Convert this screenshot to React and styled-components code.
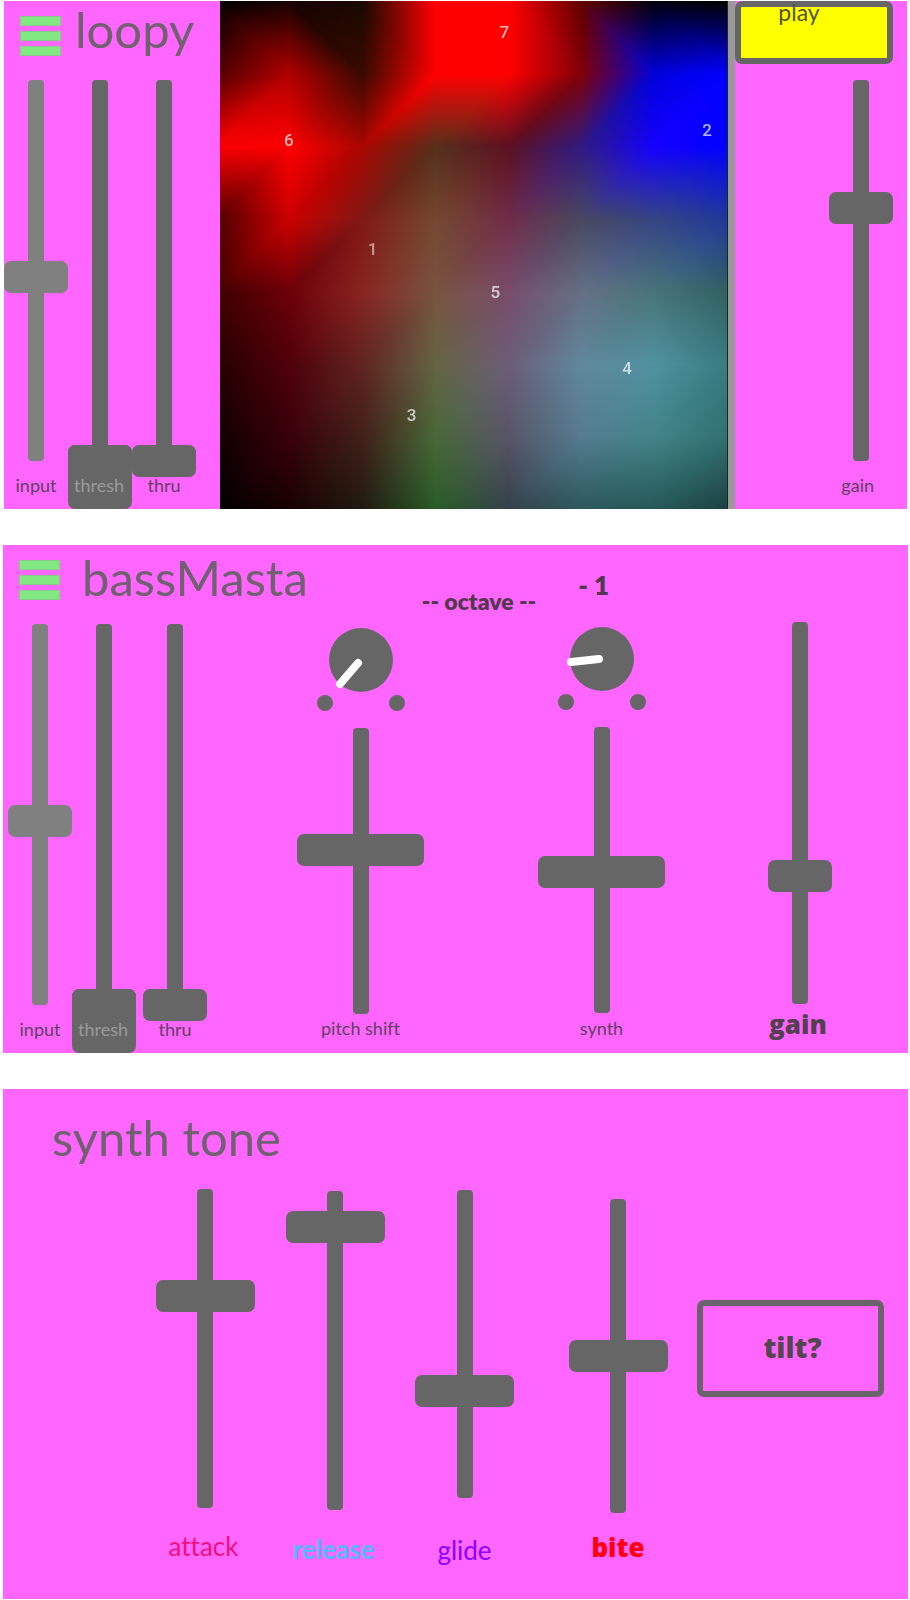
import React, { useEffect, useRef, useState } from "react";
import styled, { createGlobalStyle } from "styled-components";

const GlobalStyle = createGlobalStyle`
  *, *::before, *::after { box-sizing: border-box; }
  body {
    margin: 0;
    background: #fff;
    font-family: Lato, "Open Sans", sans-serif;
    font-variant-ligatures: none;
    color: #5a4a5c;
  }
  button, input { font: inherit; font-variant-ligatures: none; color: inherit; margin: 0; }
`;

const Page = styled.main`
  display: flex;
  flex-direction: column;
  gap: 36px;
  padding: 1px 2px 1px 3px;
`;

const Panel = styled.section`
  background: #ff66ff;
  min-height: ${(p) => p.$height || 508}px;
`;

const LoopyPanel = styled(Panel)`
  display: grid;
  grid-template-columns: 216px minmax(0, 1fr) 7px 172px;
  margin: 0 1px;
`;

const Header = styled.header`
  display: flex;
  align-items: flex-start;
  height: ${(p) => p.$height || 79}px;
  padding: ${(p) => p.$pad || "0 0 0 16px"};
`;

const Title = styled.h1`
  margin: 0;
  padding-top: ${(p) => p.$top || 0}px;
  padding-left: ${(p) => p.$left || 0}px;
  font-size: 49px;
  line-height: 56px;
  font-weight: 400;
  color: #706070;
  white-space: nowrap;
`;

const MenuButton = styled.button`
  display: flex;
  flex-direction: column;
  gap: 5px;
  width: 41px;
  margin-top: 15px;
  padding: 0;
  border: 0;
  background: none;
`;

const MenuBar = styled.span`
  height: 10px;
  width: 100%;
  background: #82e882;
  outline: 1px solid rgba(150, 150, 150, 0.35);
  outline-offset: -1px;
  border-radius: 1px;
`;

const InputBank = styled.div`
  display: flex;
  padding-left: ${(p) => p.$left || 0}px;
  padding-top: ${(p) => p.$top || 0}px;
`;

const Channel = styled.div`
  display: flex;
  flex-direction: column;
  align-items: ${(p) => p.$align || "center"};
  padding-top: ${(p) => p.$top || 0}px;
  margin-left: ${(p) => p.$left || 0}px;
  min-width: 64px;
`;

const FaderBox = styled.div`
  display: grid;
  width: ${(p) => p.$thumb}px;
  height: ${(p) => p.$length}px;
  color: ${(p) => p.$color};

  &::before {
    content: "";
    grid-area: 1 / 1;
    justify-self: center;
    width: 16px;
    height: 100%;
    border-radius: 4px;
    background: currentColor;
  }
`;

const FaderInput = styled.input`
  grid-area: 1 / 1;
  width: ${(p) => p.$thumb}px;
  height: ${(p) => p.$length + 32}px;
  margin: -16px 0;
  appearance: none;
  background: none;
  writing-mode: vertical-lr;
  direction: rtl;

  &::-webkit-slider-runnable-track {
    width: 100%;
    height: 100%;
    background: none;
  }
  &::-webkit-slider-thumb {
    appearance: none;
    width: ${(p) => p.$thumb}px;
    height: 32px;
    border: 0;
    border-radius: 7px;
    background: currentColor;
  }
`;

const Label = styled.label`
  margin-top: ${(p) => p.$gap ?? 14}px;
  padding-right: ${(p) => p.$right || 0}px;
  font-size: ${(p) => p.$size || 18}px;
  line-height: ${(p) => p.$line || 20}px;
  font-weight: ${(p) => p.$weight || 400};
  color: ${(p) => p.$color || "#5f405f"};
  white-space: nowrap;
`;

const HeavyLabel = styled(Label)`
  font-family: "Open Sans", Lato, sans-serif;
  font-weight: 800;
`;

const ThreshButton = styled.button`
  width: 64px;
  height: 64px;
  margin-top: -16px;
  padding: 16px 2px 0 0;
  border: 0;
  border-radius: 7px;
  background: #666;
  color: #9a9a9a;
  font-size: 18px;
  line-height: 20px;
  z-index: 1;
`;

const Pad = styled.div`
  position: relative;
  border-right: 1px solid #222;
`;

const PadCanvas = styled.canvas`
  display: block;
  width: 100%;
  height: 100%;
`;

const PadPoint = styled.span`
  position: absolute;
  transform: translate(-50%, -50%);
  font-family: Roboto, sans-serif;
  font-size: 17px;
  line-height: 20px;
  font-weight: 500;
  color: rgba(255, 255, 255, ${(p) => p.$alpha || 0.7});
`;

const Divider = styled.div`
  background: #999;
`;

const PlaySide = styled.div`
  display: flex;
  flex-direction: column;
  align-items: flex-end;
  padding-right: 14px;
`;

const PlayButton = styled.button`
  display: flex;
  justify-content: center;
  align-items: flex-start;
  width: 100%;
  height: 63px;
  margin-bottom: 16px;
  padding: 0 30px 0 0;
  border: 6px solid #666;
  border-radius: 7px;
  background: #ff0;
  color: #55552a;
  font-size: 23px;
  line-height: 10px;
`;

const BassGrid = styled.div`
  display: grid;
  grid-template-columns: 237px 241fr 241fr 156fr 30fr;
`;

const ToneGrid = styled.div`
  display: grid;
  grid-template-columns: 137px 130fr 130fr 129fr 10fr 158fr 187fr 24fr;
`;

const Readout = styled.output`
  padding-top: ${(p) => p.$top}px;
  margin-left: ${(p) => p.$left}px;
  font-size: ${(p) => p.$size}px;
  line-height: 24px;
  font-weight: 800;
  color: #54384f;
  white-space: nowrap;
`;

const KnobBox = styled.label`
  display: grid;
  width: 88px;
  height: 83px;
  margin-bottom: 17px;
`;

const KnobFace = styled.svg`
  grid-area: 1 / 1;
  width: 88px;
  height: 83px;
  overflow: visible;
`;

const KnobInput = styled.input`
  grid-area: 1 / 1;
  width: 88px;
  height: 83px;
  opacity: 0;
`;

const Spacer = styled.div``;

const TiltButton = styled.button`
  width: 100%;
  height: 97px;
  margin-top: 111px;
  padding: 0 0 4px 4px;
  border: 6px solid #6a646a;
  border-radius: 7px;
  background: none;
  color: #54464f;
  font-family: "Open Sans", Lato, sans-serif;
  font-size: 28px;
  line-height: 32px;
  font-weight: 800;
`;

function Fader({ id, length = 381, thumb = 64, value, color = "#666" }) {
  const [level, setLevel] = useState(value);
  return (
    <FaderBox $length={length} $thumb={thumb} $color={color}>
      <FaderInput
        id={id}
        type="range"
        min="0"
        max="1000"
        value={level}
        onChange={(e) => setLevel(e.target.value)}
        aria-label={id.replace("-", " ")}
        $length={length}
        $thumb={thumb}
      />
    </FaderBox>
  );
}

function Knob({ name, value, tip }) {
  return (
    <KnobBox>
      <KnobFace viewBox="0 0 88 83" aria-hidden="true">
        <circle cx="44" cy="32" r="32" fill="#666" />
        <circle cx="8" cy="75" r="8" fill="#666" />
        <circle cx="80" cy="75" r="8" fill="#666" />
        <line x1="41" y1={tip.y0} x2={tip.x} y2={tip.y} stroke="#fff" strokeWidth="8" strokeLinecap="round" />
      </KnobFace>
      <KnobInput type="range" defaultValue={value} aria-label={name} />
    </KnobBox>
  );
}

function Menu() {
  return (
    <MenuButton type="button" aria-label="menu">
      <MenuBar />
      <MenuBar />
      <MenuBar />
    </MenuButton>
  );
}

function Bank({ prefix, left, top, thruLeft }) {
  return (
    <InputBank $left={left} $top={top}>
      <Channel>
        <Fader id={prefix + "-input"} value={484} color="#808080" />
        <Label htmlFor={prefix + "-input"}>input</Label>
      </Channel>
      <Channel>
        <Fader id={prefix + "-thresh"} value={0} />
        <ThreshButton type="button">thresh</ThreshButton>
      </Channel>
      <Channel $left={thruLeft}>
        <Fader id={prefix + "-thru"} value={0} />
        <Label htmlFor={prefix + "-thru"}>thru</Label>
      </Channel>
    </InputBank>
  );
}

// Corner colours of the 7 x 7 cells of the loop pad, row by row.
const MESH = [
  ["000000", "180200", "180a00", "ff0000", "ff0000", "600000", "00000c", "000000"],
  ["500000", "b00000", "380a00", "ff0000", "ff0000", "800008", "0000dc", "0000ff"],
  ["f80000", "ff0000", "a80600", "55301a", "5c1020", "301a80", "1400ff", "0000ff"],
  ["500000", "cc0000", "801814", "744830", "702c48", "484860", "344484", "203898"],
  ["400000", "6c0008", "882420", "785440", "784c6c", "647084", "487478", "306060"],
  ["240000", "50000a", "602420", "646444", "6c5c78", "60889c", "5092a0", "387c80"],
  ["100000", "38000a", "402018", "486838", "585468", "547c90", "428488", "307070"],
  ["000000", "180000", "201a10", "285c24", "34404a", "2e585c", "265858", "1c4040"],
].map((row) => row.map((c) => [0, 2, 4].map((i) => parseInt(c.slice(i, i + 2), 16))));

const POINTS = [
  ["6", 69, 139], ["7", 285, 31], ["1", 153, 248, 0.55], ["2", 488, 129],
  ["5", 276, 291], ["4", 408, 367], ["3", 192, 414],
];

// Each cell is two flat-shaded triangles: the top row splits from its upper
// left corner, every other row from its lower left corner.
function shade(a, b, c, d, fx, fy, firstRow) {
  if (firstRow) {
    return fx > fy
      ? a + (b - a) * fx + (d - b) * fy
      : a + (c - a) * fy + (d - c) * fx;
  }
  return fx + fy < 1
    ? a + (b - a) * fx + (c - a) * fy
    : d + (c - d) * (1 - fx) + (b - d) * (1 - fy);
}

function LoopPad() {
  const ref = useRef(null);
  useEffect(() => {
    const size = 508;
    const lead = 4;
    const ctx = ref.current.getContext("2d");
    const img = ctx.createImageData(size, size);
    for (let y = 0; y < size; y++) {
      const v = (y / size) * 7;
      const r = Math.floor(v);
      for (let x = 0; x < size; x++) {
        const u = ((x + lead) / (size + lead)) * 7;
        const c = Math.floor(u);
        const at = (y * size + x) * 4;
        for (let k = 0; k < 3; k++) {
          img.data[at + k] = shade(
            MESH[r][c][k], MESH[r][c + 1][k], MESH[r + 1][c][k], MESH[r + 1][c + 1][k],
            u - c, v - r, r === 0
          );
        }
        img.data[at + 3] = 255;
      }
    }
    ctx.putImageData(img, 0, 0);
  }, []);
  return (
    <Pad>
      <PadCanvas ref={ref} width="508" height="508" />
      {POINTS.map(([n, x, y, alpha]) => (
        <PadPoint key={n} $alpha={alpha} style={{ left: (x / 508) * 100 + "%", top: (y / 508) * 100 + "%" }}>
          {n}
        </PadPoint>
      ))}
    </Pad>
  );
}

export default function App() {
  return (
    <>
      <GlobalStyle />
      <Page>
        <LoopyPanel>
          <div>
            <Header>
              <Menu />
              <Title $left={14}>loopy</Title>
            </Header>
            <Bank prefix="loopy" left={0} thruLeft={0} />
          </div>
          <LoopPad />
          <Divider />
          <PlaySide>
            <PlayButton type="button">play</PlayButton>
            <Fader id="loopy-gain" value={663} />
            <Label htmlFor="loopy-gain" $right={19}>gain</Label>
          </PlaySide>
        </LoopyPanel>

        <Panel>
          <Header $height={77}>
            <Menu />
            <Title $left={22} $top={4}>bassMasta</Title>
            <Readout $top={44} $left={114} $size={23}>-- octave --</Readout>
            <Readout $top={28} $left={42} $size={26}>- 1</Readout>
          </Header>
          <BassGrid>
            <Bank prefix="bass" left={5} top={2} thruLeft={7} />
            <Channel $top={6}>
              <Knob name="pitch shift octave" value={5} tip={{ y0: 35, x: 23, y: 56 }} />
              <Fader id="pitch" length={286} thumb={127} value={573} />
              <Label htmlFor="pitch" $gap={4}>pitch shift</Label>
            </Channel>
            <Channel $top={5}>
              <Knob name="synth octave" value={20} tip={{ y0: 32, x: 13, y: 35 }} />
              <Fader id="synth" length={286} thumb={127} value={493} />
              <Label htmlFor="synth" $gap={5}>synth</Label>
            </Channel>
            <Channel>
              <Fader id="bass-gain" length={382} value={336} />
              <HeavyLabel htmlFor="bass-gain" $gap={8} $size={26} $line={24} $right={4} $color="#54404f">gain</HeavyLabel>
            </Channel>
          </BassGrid>
        </Panel>

        <Panel $height={510}>
          <Header $height={100} $pad="20px 0 0 49px">
            <Title>synth tone</Title>
          </Header>
          <ToneGrid>
            <Spacer />
            <Channel>
              <Fader id="attack" length={319} thumb={99} value={666} />
              <Label htmlFor="attack" $gap={22} $size={26} $line={32} $right={3} $color="#f0107c">attack</Label>
            </Channel>
            <Channel $top={2}>
              <Fader id="release" length={319} thumb={99} value={886} />
              <Label htmlFor="release" $gap={23} $size={26} $line={32} $weight={700} $right={3} $color="#55b8f8">release</Label>
            </Channel>
            <Channel $top={1}>
              <Fader id="glide" length={308} thumb={99} value={347} />
              <Label htmlFor="glide" $gap={36} $size={26} $line={32} $color="#8800ff">glide</Label>
            </Channel>
            <Spacer />
            <Channel $top={10}>
              <Fader id="bite" length={314} thumb={99} value={500} />
              <HeavyLabel htmlFor="bite" $gap={18} $size={26} $line={32} $color="#ff0010">bite</HeavyLabel>
            </Channel>
            <TiltButton type="button">tilt?</TiltButton>
          </ToneGrid>
        </Panel>
      </Page>
    </>
  );
}
